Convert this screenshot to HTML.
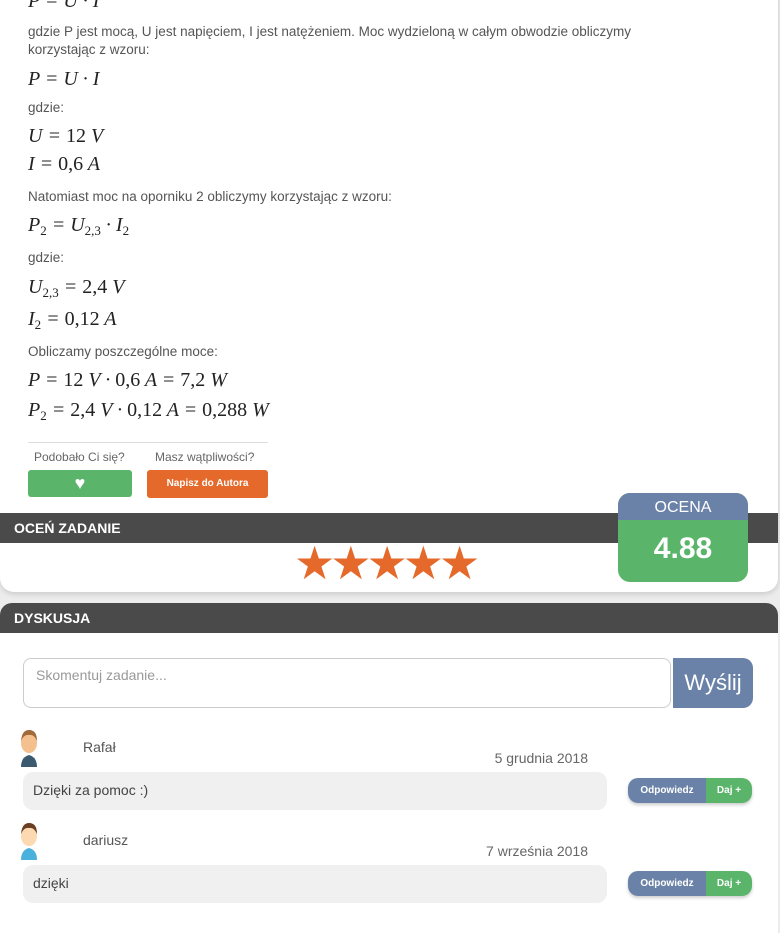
<!DOCTYPE html>
<html><head><meta charset="utf-8"><style>
*{box-sizing:border-box;margin:0;padding:0}
body{width:780px;height:915px;overflow:hidden;background:#ececec;font-family:"Liberation Sans",sans-serif;color:#555;position:relative}
.card1{position:absolute;left:0;top:-20px;width:778px;height:612px;background:#fff;border-radius:0 0 14px 14px;box-shadow:0 2px 6px rgba(0,0,0,.15)}
.card2{position:absolute;left:0;top:603px;width:778px;height:330px;background:#fff;border-radius:12px 12px 0 0}
.a{position:absolute;white-space:nowrap}
.t{font-size:13.5px;color:#555;left:28px}
.m{font-family:"Liberation Serif",serif;font-style:italic;font-size:20px;color:#222;left:28px}
.m .n{font-style:normal}
sub{font-size:13px;font-style:normal;vertical-align:-4px}
.bar{position:absolute;left:0;width:778px;height:30px;background:#4a4a4a;color:#fff;font-size:14px;font-weight:bold;padding:7px 14px}
.btn{position:absolute;border-radius:3px;color:#fff;text-align:center}
.pill{position:absolute;left:628px;width:124px;height:25px;border-radius:10px;overflow:hidden;box-shadow:0 2px 3px rgba(0,0,0,.2);font-size:10px;font-weight:bold;color:#fff}
.pill span{position:absolute;top:0;height:25px;line-height:25px;text-align:center}
.bub{position:absolute;left:23px;width:584px;height:38px;background:#f0f0f0;border-radius:10px;font-size:14px;color:#444;padding:10px 10px}
.date{font-size:14px;color:#666;right:192px}
</style></head><body>
<div class="card1"></div>
<div class="a m" style="top:-10px">P = U · I</div>
<div class="a t" style="top:24px">gdzie P jest mocą, U jest napięciem, I jest natężeniem. Moc wydzieloną w całym obwodzie obliczymy</div>
<div class="a t" style="top:42px">korzystając z wzoru:</div>
<div class="a m" style="top:68px">P = U · I</div>
<div class="a t" style="top:100px">gdzie:</div>
<div class="a m" style="top:125px">U = <span class="n">12</span> V</div>
<div class="a m" style="top:153px">I = <span class="n">0,6</span> A</div>
<div class="a t" style="top:189px">Natomiast moc na oporniku 2 obliczymy korzystając z wzoru:</div>
<div class="a m" style="top:214px">P<sub>2</sub> = U<sub>2,3</sub> · I<sub>2</sub></div>
<div class="a t" style="top:250px">gdzie:</div>
<div class="a m" style="top:276px">U<sub>2,3</sub> = <span class="n">2,4</span> V</div>
<div class="a m" style="top:308px">I<sub>2</sub> = <span class="n">0,12</span> A</div>
<div class="a t" style="top:344px">Obliczamy poszczególne moce:</div>
<div class="a m" style="top:369px">P = <span class="n">12</span> V · <span class="n">0,6</span> A = <span class="n">7,2</span> W</div>
<div class="a m" style="top:399px">P<sub>2</sub> = <span class="n">2,4</span> V · <span class="n">0,12</span> A = <span class="n">0,288</span> W</div>
<div class="a" style="left:28px;top:442px;width:240px;height:1px;background:#ddd"></div>
<div class="a" style="left:34px;top:450px;font-size:12px;color:#666">Podobało Ci się?</div>
<div class="a" style="left:155px;top:450px;font-size:12px;color:#666">Masz wątpliwości?</div>
<div class="btn" style="left:28px;top:470px;width:104px;height:27px;background:#5ab56a;font-size:18px;line-height:27px">♥</div>
<div class="btn" style="left:147px;top:470px;width:121px;height:28px;background:#e5692a;font-size:10px;font-weight:bold;line-height:28px">Napisz do Autora</div>
<div class="bar" style="top:513px">OCEŃ ZADANIE</div>
<div class="a" style="left:294px;top:536px;font-size:46px;color:#e5692a;letter-spacing:-5px">★★★★★</div>
<div class="a" style="left:618px;top:493px;width:130px;height:89px;border-radius:12px;overflow:hidden;background:#5ab56a">
<div style="height:27px;background:#6b82a8;color:#fff;text-align:center;font-size:16px;line-height:29px">OCENA</div>
<div style="color:#fff;text-align:center;font-size:30px;font-weight:bold;line-height:58px">4.88</div></div>
<div class="card2"></div>
<div class="bar" style="top:603px;border-radius:12px 12px 0 0">DYSKUSJA</div>
<div class="a" style="left:23px;top:658px;width:648px;height:50px;border:1px solid #ccc;border-radius:8px;font-size:14px;color:#999;padding:8px 12px">Skomentuj zadanie...</div>
<div class="a" style="left:673px;top:658px;width:80px;height:50px;background:#6b82a8;border-radius:0 10px 10px 0;color:#fff;font-size:22px;line-height:50px;text-align:center">Wyślij</div>
<svg class="a" style="left:19px;top:729px" width="20" height="38" viewBox="0 0 20 38"><path d="M2 38 Q2 28 10 26 Q18 28 18 38Z" fill="#3b5a70"/><ellipse cx="10" cy="14" rx="8" ry="10" fill="#f3c08e"/><path d="M2 12 Q3 1 10 1 Q18 1 18 12 Q15 5 10 6 Q5 5 2 12Z" fill="#a06a3a"/></svg>
<div class="a" style="left:83px;top:739px;font-size:14px;color:#555">Rafał</div>
<div class="a date" style="top:750px">5 grudnia 2018</div>
<div class="bub" style="top:772px">Dzięki za pomoc :)</div>
<div class="pill" style="top:778px"><span style="left:0;width:78px;background:#6b82a8">Odpowiedz</span><span style="left:78px;width:46px;background:#5ab56a">Daj +</span></div>
<svg class="a" style="left:19px;top:822px" width="20" height="38" viewBox="0 0 20 38"><path d="M2 38 Q2 28 10 26 Q18 28 18 38Z" fill="#4ab0dc"/><ellipse cx="10" cy="14" rx="8" ry="10" fill="#fcd9b0"/><path d="M2 12 Q3 1 10 1 Q18 1 18 12 Q15 5 10 6 Q5 5 2 12Z" fill="#6a3e22"/></svg>
<div class="a" style="left:83px;top:832px;font-size:14px;color:#555">dariusz</div>
<div class="a date" style="top:843px">7 września 2018</div>
<div class="bub" style="top:865px">dzięki</div>
<div class="pill" style="top:871px"><span style="left:0;width:78px;background:#6b82a8">Odpowiedz</span><span style="left:78px;width:46px;background:#5ab56a">Daj +</span></div>
</body></html>
